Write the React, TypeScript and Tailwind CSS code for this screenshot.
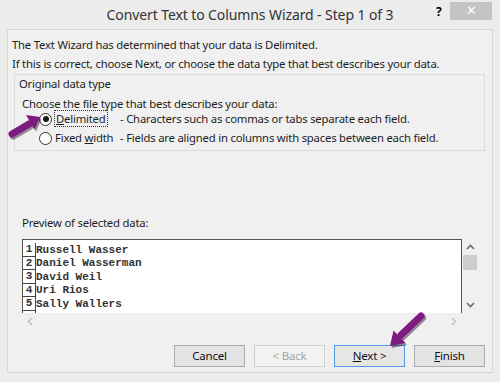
import React from 'react';

const ROWS = ['Russell Wasser', 'Daniel Wasserman', 'David Weil', 'Uri Rios', 'Sally Wallers'];

const ui = { fontFamily: '"Noto Sans", "Open Sans", sans-serif' };
const mono = { fontFamily: '"Liberation Mono", "Courier New", monospace' };

function Radio({ checked }: { checked?: boolean }) {
  return (
    <span className="flex h-[13px] w-[13px] items-center justify-center rounded-full border border-[#333] bg-white">
      {checked && <span className="h-[6px] w-[6px] rounded-full bg-[#1a1a1a]" />}
    </span>
  );
}

function Chevron({ d, color }: { d: string; color: string }) {
  return (
    <svg width="9" height="9" viewBox="0 0 9 9">
      <path d={d} fill="none" stroke={color} strokeWidth="1.6" />
    </svg>
  );
}

function Button({ children, disabled, primary }: { children: React.ReactNode; disabled?: boolean; primary?: boolean }) {
  return (
    <button
      className={
        'flex h-[22px] w-[71px] items-center justify-center border text-[11.5px] tracking-[-0.2px] ' +
        (disabled
          ? 'border-[#cfcfcf] bg-[#f2f2f2] text-[#a3a3a3]'
          : primary
            ? 'border-[#4f9ae2] bg-[#e6e6e6] text-[#111]'
            : 'border-[#acacac] bg-[#e3e3e3] text-[#111]')
      }
    >
      {children}
    </button>
  );
}

export default function App() {
  return (
    <div className="relative h-[382px] w-[500px] overflow-hidden bg-[#ececec] text-[#1e1e1e]" style={ui}>
      {/* title bar */}
      <div className="flex h-[29px] items-center justify-center pb-[1px] text-[14px] tracking-[-0.1px] text-[#333]">
        Convert Text to Columns Wizard - Step 1 of 3
      </div>
      <span className="absolute left-[436px] top-[3px] text-[12px] font-bold text-black">?</span>
      <div className="absolute left-[450px] top-[2px] flex h-[18px] w-[42px] items-center justify-center bg-[#c4c4c4] text-[13px] text-white">
        ✕
      </div>

      {/* content */}
      <div className="mx-[7px] flex h-[344px] flex-col border border-[#d6d6d6] bg-[#f0f0f0] text-[11.3px] tracking-[-0.2px]">
        <div className="pl-[4px] pt-[5px] leading-[19px]">
          <p>The Text Wizard has determined that your data is Delimited.</p>
          <p>If this is correct, choose Next, or choose the data type that best describes your data.</p>
        </div>

        <div className="ml-[6px] mt-[1px] h-[77px] w-[471px] border border-[#dcdcdc] pl-[4px] leading-[16px]">
          <p className="pt-[1px]">Original data type</p>
          <p className="pl-[3px] pt-[4px]">Choose the file type that best describes your data:</p>
          <div className="-mt-[1px] flex h-[16px] items-center">
            <span className="ml-[20px]"><Radio checked /></span>
            <span className="ml-[2px] w-[66px]">
              <span className="border border-dotted border-[#333] px-[1px]">
                <span className="underline">D</span>elimited
              </span>
            </span>
            <span>- Characters such as commas or tabs separate each field.</span>
          </div>
          <div className="mt-[3px] flex h-[16px] items-center">
            <span className="ml-[20px]"><Radio /></span>
            <span className="ml-[3px] w-[65px]">
              Fixed <span className="underline">w</span>idth
            </span>
            <span>- Fields are aligned in columns with spaces between each field.</span>
          </div>
        </div>

        <p className="ml-[14px] mt-[64px] leading-[16px]">Preview of selected data:</p>

        {/* preview */}
        <div className="ml-[14px] mt-[8px] flex">
          <div className="flex flex-col">
            <div className="h-[74px] w-[440px] overflow-hidden border-x border-t border-[#555] bg-white pt-[3px] tracking-normal" style={mono}>
              {ROWS.map((r, i) => (
                <div key={i} className="flex h-[13.6px] items-center text-[11px] font-bold text-[#333]">
                  <span className="flex h-full w-[13px] items-center justify-center border-b border-r border-[#444]">{i + 1}</span>
                  <span>{r}</span>
                </div>
              ))}
              <div className="h-[13px] w-[13px] border-r border-[#444]" />
            </div>
            <div className="flex h-[16px] items-center justify-between px-[4px]">
              <Chevron d="M6 1 L2.5 4.5 L6 8" color="#c4c4c4" />
              <Chevron d="M3 1 L6.5 4.5 L3 8" color="#c4c4c4" />
            </div>
          </div>
          <div className="flex h-[74px] w-[16px] flex-col items-center pt-[4px]">
            <Chevron d="M1 6 L4.5 2.5 L8 6" color="#6a6a6a" />
            <div className="mt-[3px] h-[15px] w-[14px] bg-[#cdcdcd]" />
            <div className="flex-1" />
            <div className="pb-[4px]">
              <Chevron d="M1 3 L4.5 6.5 L8 3" color="#6a6a6a" />
            </div>
          </div>
        </div>

        {/* buttons */}
        <div className="mt-auto flex justify-end gap-[9px] pb-[5px] pr-[7px]">
          <Button>Cancel</Button>
          <Button disabled>&lt; Back</Button>
          <Button primary><span className="underline">N</span>ext &gt;</Button>
          <Button><span className="underline">F</span>inish</Button>
        </div>
      </div>

      {/* annotation arrows */}
      <svg className="pointer-events-none absolute left-0 top-0" width="500" height="382">
        <g transform="translate(1.5 2)" opacity="0.45">
          <line x1="12" y1="134" x2="29" y2="124" stroke="#2a0a2c" strokeWidth="7" strokeLinecap="round" />
          <polygon points="40,117 34.5,129.5 26,115" fill="#2a0a2c" />
          <line x1="421" y1="316" x2="401" y2="335" stroke="#2a0a2c" strokeWidth="7" strokeLinecap="round" />
          <polygon points="390,346 405.5,343 393.5,330.5" fill="#2a0a2c" />
        </g>
        <line x1="12" y1="134" x2="29" y2="124" stroke="#7d1b80" strokeWidth="7" strokeLinecap="round" />
        <polygon points="40,117 34.5,129.5 26,115" fill="#7d1b80" />
        <line x1="421" y1="316" x2="401" y2="335" stroke="#7d1b80" strokeWidth="7" strokeLinecap="round" />
        <polygon points="390,346 405.5,343 393.5,330.5" fill="#7d1b80" />
      </svg>
    </div>
  );
}
